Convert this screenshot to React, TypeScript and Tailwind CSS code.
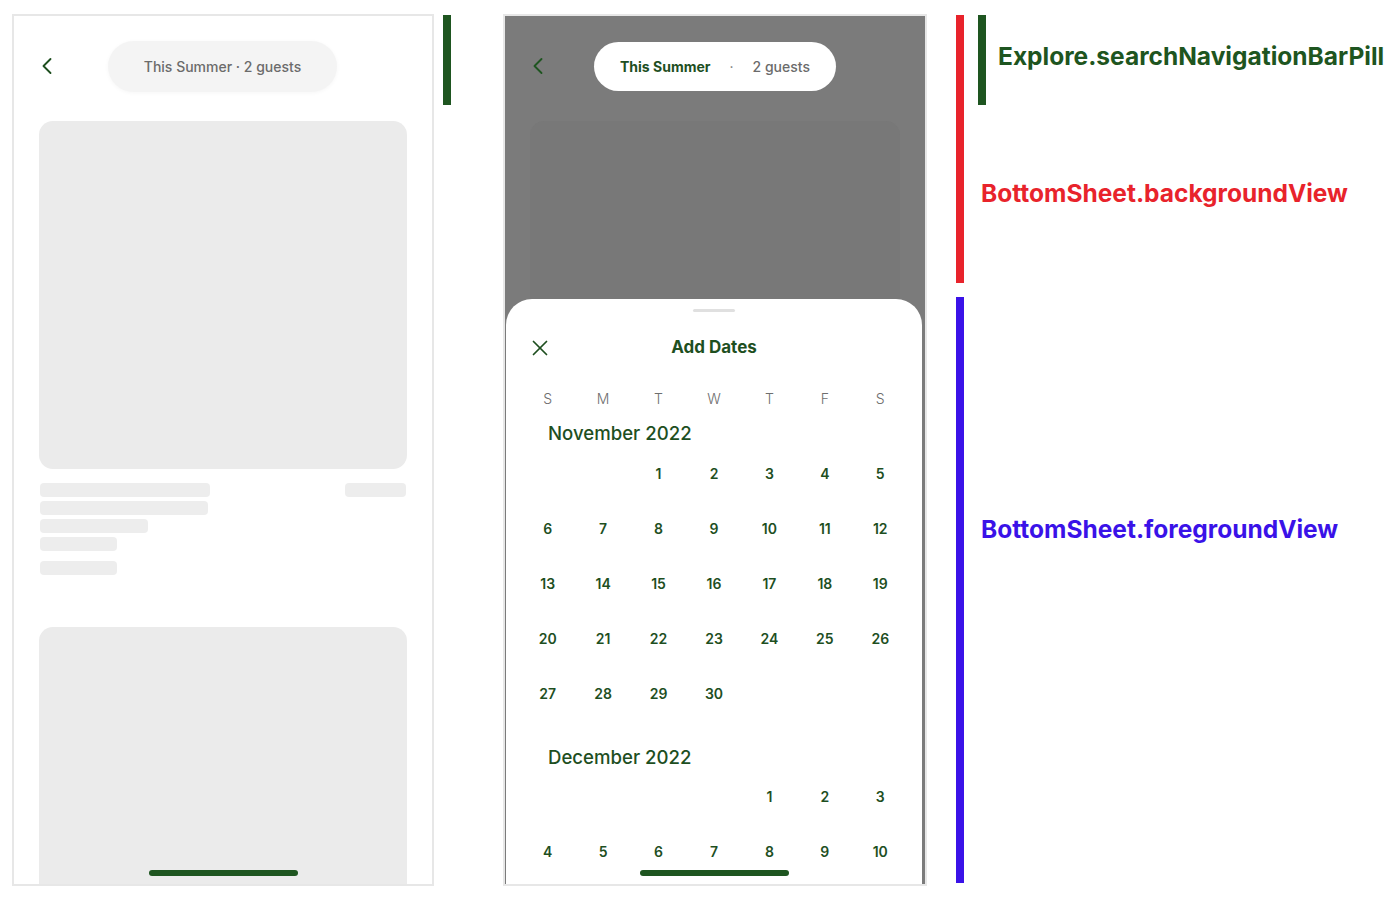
import React from "react";
import { ChevronLeft, X } from "lucide-react";

const green = "text-[#1e4f1f]";
const weekdays = ["S", "M", "T", "W", "T", "F", "S"];

function DateGrid({ offset, days }: { offset: number; days: number[] }) {
  const cells: (number | null)[] = [...Array(offset).fill(null), ...days];
  return (
    <div className="grid grid-cols-7">
      {cells.map((d, i) => (
        <div
          key={i}
          className={`h-[55px] flex items-center justify-center text-[14px] font-semibold ${green}`}
        >
          {d}
        </div>
      ))}
    </div>
  );
}

function LeftPhone() {
  return (
    <div className="relative w-[422px] h-[872px] border-2 border-[#e7e7e7] bg-white overflow-hidden shrink-0">
      <div className="h-[50px] mt-[25px] flex items-center">
        <ChevronLeft size={28} strokeWidth={1.6} className="ml-[19px] text-[#1e4f1f]" />
        <div className="ml-[47px] w-[229px] h-[51px] rounded-full bg-[#f4f4f4] shadow-[0_1px_4px_rgba(0,0,0,0.04)] flex items-center justify-center text-[14px] text-[#6b6b6b] font-medium">
          This Summer · 2 guests
        </div>
      </div>
      <div className="mx-[25px] mt-[30px] h-[348px] rounded-[14px] bg-[#ebebeb]" />
      <div className="mx-[26px] mt-[14px] flex justify-between">
        <div className="flex flex-col gap-[4px]">
          <div className="w-[170px] h-[14px] rounded-[4px] bg-[#ededed]" />
          <div className="w-[168px] h-[14px] rounded-[4px] bg-[#ededed]" />
          <div className="w-[108px] h-[14px] rounded-[4px] bg-[#ededed]" />
          <div className="w-[77px] h-[14px] rounded-[4px] bg-[#ededed]" />
          <div className="w-[77px] h-[14px] rounded-[4px] bg-[#ededed] mt-[6px]" />
        </div>
        <div className="w-[61px] h-[14px] rounded-[4px] bg-[#ededed]" />
      </div>
      <div className="mx-[25px] mt-[52px] h-[300px] rounded-[14px] bg-[#ebebeb]" />
      <div className="absolute left-[135px] top-[854px] w-[149px] h-[6px] rounded-full bg-[#1e5520]" />
    </div>
  );
}

function MiddlePhone() {
  return (
    <div className="relative w-[424px] h-[872px] border-2 border-[#e7e7e7] bg-[#7b7b7b] overflow-hidden shrink-0 flex flex-col">
      <div className="h-[50px] mt-[25px] flex items-center shrink-0">
        <ChevronLeft size={28} strokeWidth={1.6} className="ml-[19px] text-[#1e5520]" />
        <div className="ml-[42px] w-[242px] h-[49px] rounded-full bg-white flex items-center justify-center text-[14px]">
          <span className={`font-bold ${green}`}>This Summer</span>
          <span className="mx-[19px] text-[#777]">·</span>
          <span className="font-medium text-[#6b6b6b]">2 guests</span>
        </div>
      </div>
      <div className="mx-[25px] mt-[30px] h-[180px] rounded-t-[14px] bg-[#787878] shrink-0" />
      <div className="flex-1 mx-[1px] mr-[3px] -mt-[2px] bg-white rounded-t-[26px] px-[14px] pt-[10px]">
        <div className="mx-auto w-[42px] h-[3px] rounded-full bg-[#e0e0e0]" />
        <div className="relative mt-[12px] h-[48px] flex items-center justify-center">
          <X size={26} strokeWidth={1.6} className="absolute left-[7px] text-[#1e4f1f]" />
          <span className={`text-[17px] font-bold ${green}`}>Add Dates</span>
        </div>
        <div className="mt-[14px] grid grid-cols-7 h-[24px]">
          {weekdays.map((w, i) => (
            <div key={i} className="flex items-center justify-center text-[14px] font-light text-[#6e6e6e]">
              {w}
            </div>
          ))}
        </div>
        <div className={`mt-[12px] h-[24px] pl-[28px] flex items-center text-[18.6px] font-medium ${green}`}>
          November 2022
        </div>
        <DateGrid offset={2} days={Array.from({ length: 30 }, (_, i) => i + 1)} />
        <div className={`mt-[26px] h-[22px] pl-[28px] flex items-center text-[18.6px] font-medium ${green}`}>
          December 2022
        </div>
        <DateGrid offset={4} days={Array.from({ length: 10 }, (_, i) => i + 1)} />
      </div>
      <div className="absolute left-[135px] top-[854px] w-[149px] h-[6px] rounded-full bg-[#1e5520]" />
    </div>
  );
}

export default function App() {
  return (
    <div className="w-[1400px] h-[906px] bg-white flex items-start pt-[14px] pl-[12px] font-['Inter',sans-serif] overflow-hidden">
      <LeftPhone />
      <div className="ml-[9px] mt-[1px] w-[8px] h-[90px] bg-[#1e5520] shrink-0" />
      <div className="ml-[52px] shrink-0">
        <MiddlePhone />
      </div>
      <div className="ml-[29px] mt-[1px] flex flex-col shrink-0">
        <div className="w-[8px] h-[268px] bg-[#e8232b]" />
        <div className="w-[8px] h-[586px] mt-[14px] bg-[#3a12e8]" />
      </div>
      <div className="ml-[14px] mt-[1px] flex flex-col">
        <div className="flex items-center h-[90px]">
          <div className="w-[8px] h-[90px] bg-[#1e5520]" />
          <span className="ml-[12px] -mt-[8px] text-[24.5px] font-bold text-[#1e5520] whitespace-nowrap">
            Explore.searchNavigationBarPill
          </span>
        </div>
        <div className="mt-[72px] h-[32px] flex items-center ml-[3px] text-[24.5px] font-bold text-[#e8232b] whitespace-nowrap">
          BottomSheet.backgroundView
        </div>
        <div className="mt-[304px] h-[32px] flex items-center ml-[3px] text-[24.5px] font-bold text-[#3a12e8] whitespace-nowrap">
          BottomSheet.foregroundView
        </div>
      </div>
    </div>
  );
}
